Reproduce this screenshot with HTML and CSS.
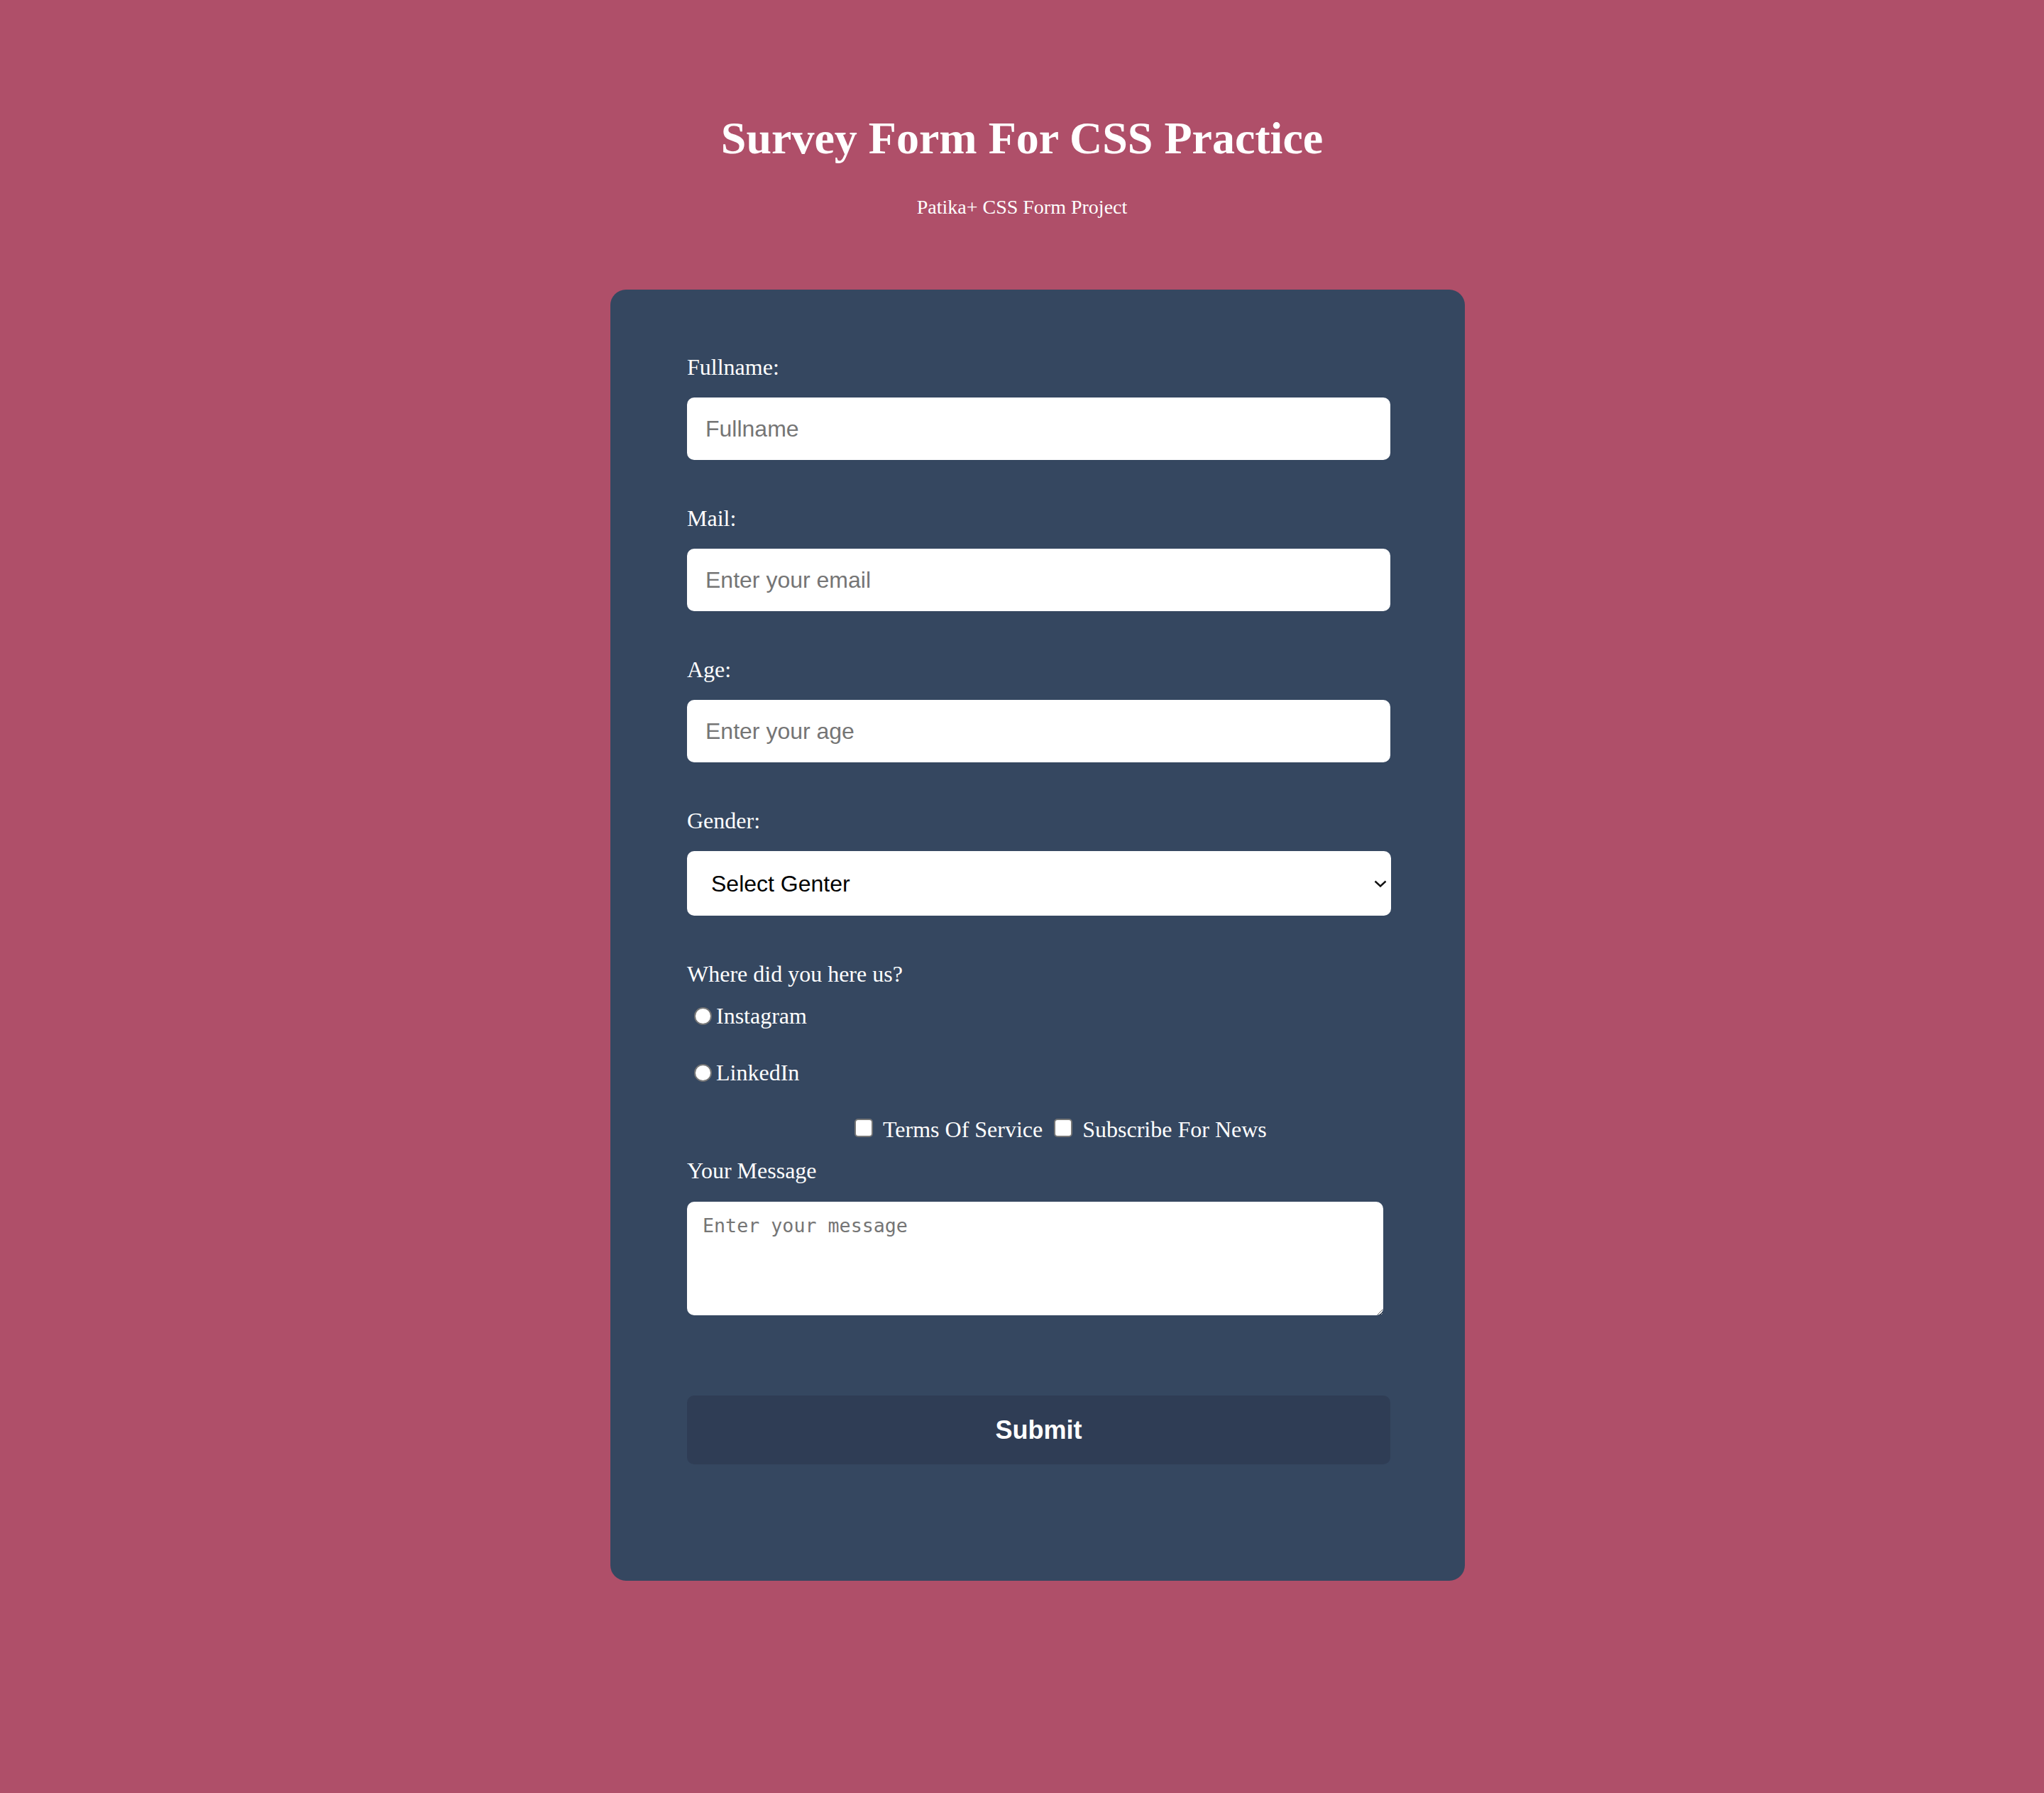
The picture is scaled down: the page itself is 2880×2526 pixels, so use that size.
FILE: index.html
```html
<!DOCTYPE html>
<html lang="en">
<head>
<meta charset="utf-8">
<title>Survey Form For CSS Practice</title>
<link rel="stylesheet" href="styles.css">
</head>
<body>
<header class="page-header">
  <h1 class="title">Survey Form For CSS Practice</h1>
  <p class="subtitle">Patika+ CSS Form Project</p>
</header>
<main class="wrap">
  <form class="card">
    <label class="field-label" for="fullname">Fullname:</label>
    <input class="text-input" id="fullname" type="text" placeholder="Fullname">

    <label class="field-label" for="mail">Mail:</label>
    <input class="text-input" id="mail" type="email" placeholder="Enter your email">

    <label class="field-label" for="age">Age:</label>
    <input class="text-input" id="age" type="number" placeholder="Enter your age">

    <label class="field-label" for="gender">Gender:</label>
    <div class="select-wrap">
      <select class="select" id="gender">
        <option>Select Genter</option>
        <option>Female</option>
        <option>Male</option>
      </select>
      <svg class="chevron" width="18" height="10" viewBox="0 0 18 10"><path d="M1.5 1.5 L9 8.5 L16.5 1.5" fill="none" stroke="#111" stroke-width="2.4"/></svg>
    </div>

    <p class="question">Where did you here us?</p>
    <div class="radio-row first"><input class="radio" type="radio" name="src" id="ig"><label for="ig">Instagram</label></div>
    <div class="radio-row"><input class="radio" type="radio" name="src" id="li"><label for="li">LinkedIn</label></div>

    <div class="check-row"><input class="check" type="checkbox" id="tos"><label for="tos">Terms Of Service</label> <input class="check second" type="checkbox" id="news"><label for="news">Subscribe For News</label></div>

    <label class="field-label msg-label" for="msg">Your Message</label>
    <textarea class="message" id="msg" placeholder="Enter your message"></textarea>

    <button class="submit" type="button">Submit</button>
  </form>
</main>
</body>
</html>
```
FILE: styles.css
```css
html, body {
  margin: 0;
  padding: 0;
}
body {
  background: #af4f69;
  font-family: "Liberation Serif", "Times New Roman", serif;
  color: #ffffff;
  min-height: 2526px;
}
.page-header {
  padding-top: 158px;
  text-align: center;
}
.title {
  margin: 0;
  font-size: 64px;
  line-height: 74px;
  font-weight: bold;
}
.subtitle {
  margin: 44px 0 0;
  font-size: 28px;
  line-height: 32px;
}
.wrap {
  display: flex;
  justify-content: center;
  padding-left: 44px;
  margin-top: 100px;
}
.card {
  width: 1204px;
  box-sizing: border-box;
  background: #354760;
  border-radius: 22px;
  padding: 91px 105px 164px 108px;
  display: flex;
  flex-direction: column;
  align-items: flex-start;
}
.field-label, .question {
  display: block;
  margin: 0;
  font-size: 32px;
  line-height: 36px;
}
.text-input {
  display: block;
  box-sizing: border-box;
  width: 991px;
  height: 88px;
  margin: 25px 0 64px;
  padding: 0 26px;
  border: 0;
  border-radius: 10px;
  background: #ffffff;
  font-family: "Liberation Sans", Arial, sans-serif;
  font-size: 32px;
  color: #000;
  outline: none;
}
.text-input::placeholder {
  color: #757575;
}
.select-wrap {
  position: relative;
  width: 992px;
  height: 91px;
  margin: 25px 0 64px;
}
.select {
  display: block;
  width: 100%;
  height: 100%;
  box-sizing: border-box;
  appearance: none;
  -webkit-appearance: none;
  border: 0;
  border-radius: 10px;
  background: #ffffff;
  padding: 0 34px;
  font-family: "Liberation Sans", Arial, sans-serif;
  font-size: 32px;
  color: #000;
  outline: none;
}
.chevron {
  position: absolute;
  right: 6px;
  top: 41px;
}
.radio-row, .check-row {
  font-size: 32px;
  line-height: 36px;
  margin-top: 44px;
}
.radio-row.first {
  margin-top: 23px;
}
.radio {
  appearance: none;
  -webkit-appearance: none;
  display: inline-block;
  box-sizing: border-box;
  width: 25px;
  height: 25px;
  margin: 0 6px 0 10px;
  border: 2px solid #767676;
  border-radius: 50%;
  background: #ffffff;
  vertical-align: -2px;
}
.check-row {
  padding-left: 225px;
}
.check {
  appearance: none;
  -webkit-appearance: none;
  display: inline-block;
  box-sizing: border-box;
  width: 26px;
  height: 26px;
  margin: 0 14px 0 11px;
  border: 2px solid #767676;
  border-radius: 5px;
  background: #ffffff;
  vertical-align: 0;
}
.check.second {
  margin-left: 8px;
}
.msg-label {
  margin-top: 22px;
}
.message {
  display: block;
  box-sizing: border-box;
  width: 981px;
  height: 160px;
  margin: 26px 0 0;
  padding: 18px 22px;
  border: 0;
  border-radius: 10px;
  background: #ffffff;
  font-family: "DejaVu Sans Mono", "Liberation Mono", monospace;
  font-size: 26.67px;
  line-height: 31px;
  outline: none;
  resize: both;
}
.message::placeholder {
  color: #757575;
}
.submit {
  display: block;
  width: 991px;
  height: 97px;
  margin-top: 113px;
  border: 0;
  border-radius: 10px;
  background: #2f3d55;
  color: #ffffff;
  font-family: "Liberation Sans", Arial, sans-serif;
  font-weight: bold;
  font-size: 36px;
  padding: 0;
}
```
